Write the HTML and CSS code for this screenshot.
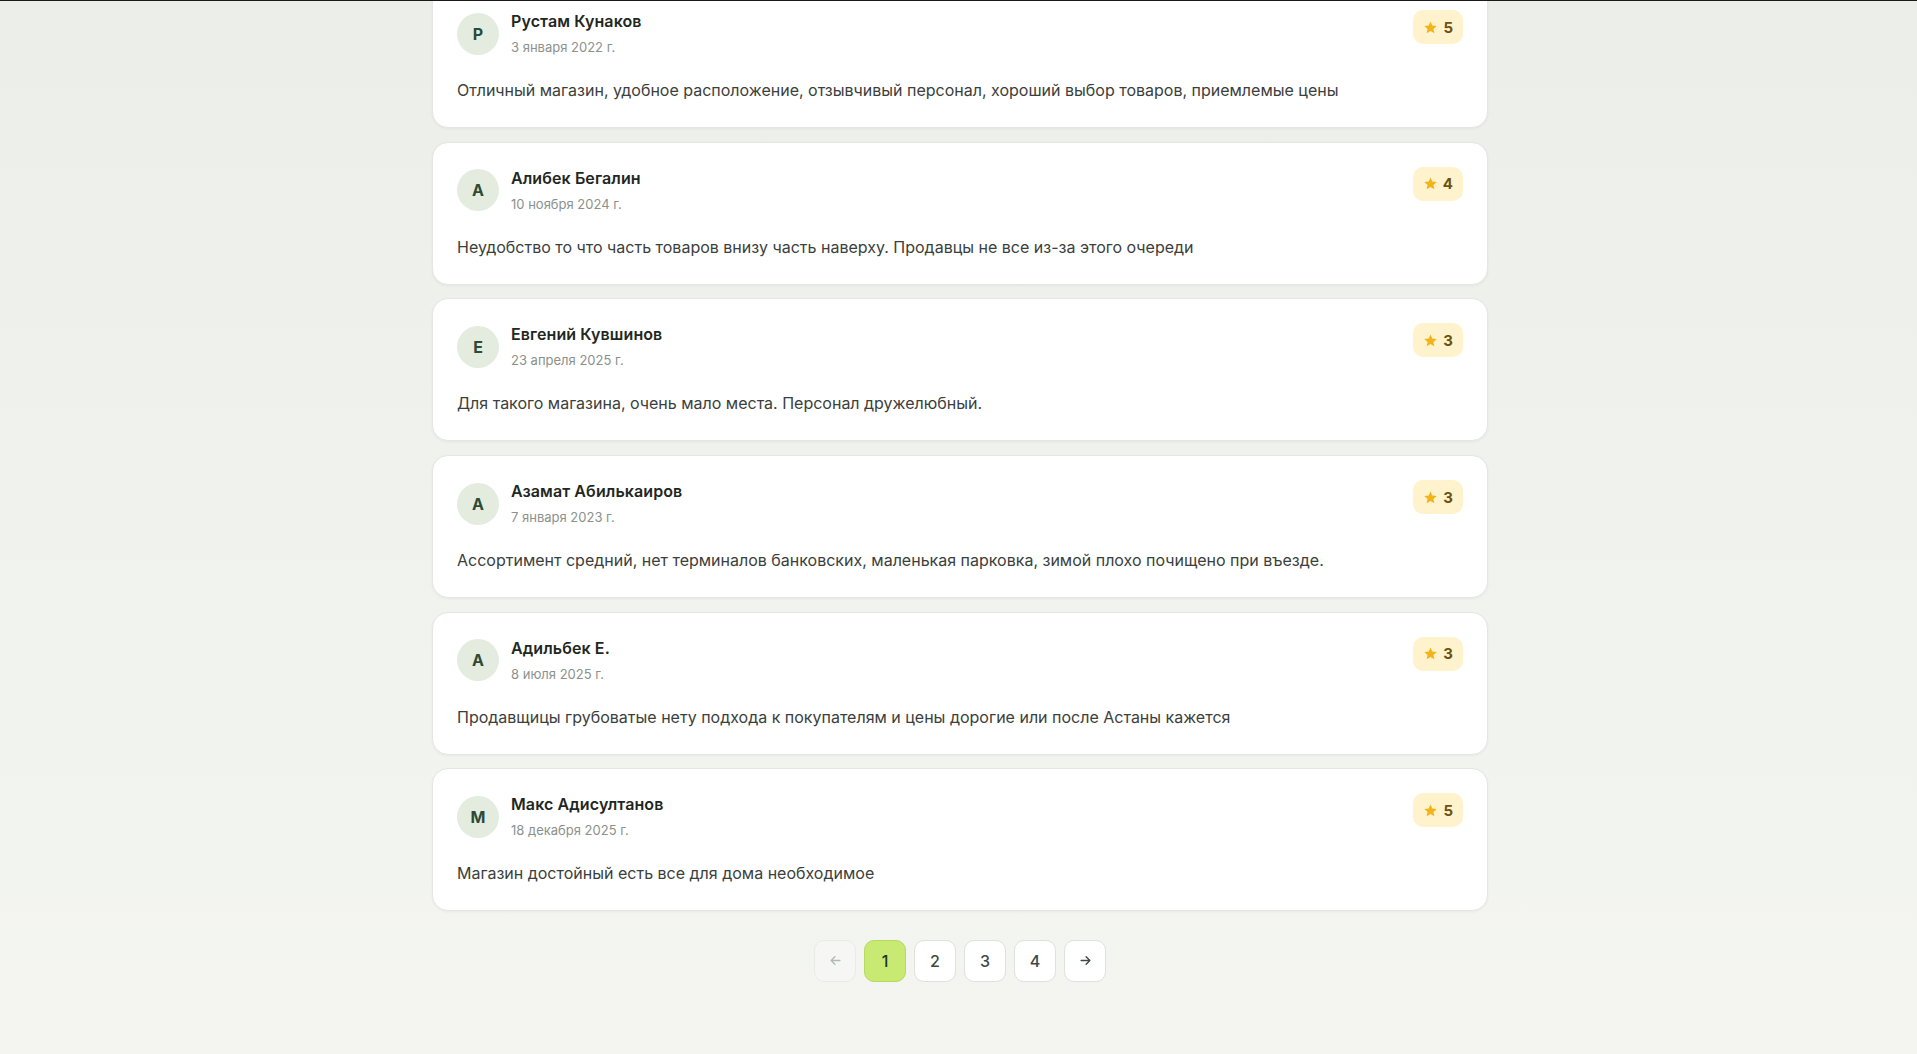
FILE: index.html
```html
<!DOCTYPE html>
<html lang="ru">
<head>
<meta charset="utf-8">
<title>Отзывы</title>
<link rel="stylesheet" href="styles.css">
</head>
<body>
<div class="topline"></div>
<main class="page">
  <section class="reviews">
    <article class="card">
      <header class="card-head">
        <div class="author">
          <div class="avatar">Р</div>
          <div class="meta">
            <div class="name">Рустам Кунаков</div>
            <div class="date">3 января 2022 г.</div>
          </div>
        </div>
        <div class="rating"><svg class="star" viewBox="0 0 24 24"><path d="M12 2.5l2.9 6.4 7 .7-5.2 4.7 1.5 6.9L12 17.6l-6.2 3.6 1.5-6.9L2.1 9.6l7-.7z"/></svg><span>5</span></div>
      </header>
      <p class="text">Отличный магазин, удобное расположение, отзывчивый персонал, хороший выбор товаров, приемлемые цены</p>
    </article>
    <article class="card">
      <header class="card-head">
        <div class="author">
          <div class="avatar">А</div>
          <div class="meta">
            <div class="name">Алибек Бегалин</div>
            <div class="date">10 ноября 2024 г.</div>
          </div>
        </div>
        <div class="rating"><svg class="star" viewBox="0 0 24 24"><path d="M12 2.5l2.9 6.4 7 .7-5.2 4.7 1.5 6.9L12 17.6l-6.2 3.6 1.5-6.9L2.1 9.6l7-.7z"/></svg><span>4</span></div>
      </header>
      <p class="text">Неудобство то что часть товаров внизу часть наверху. Продавцы не все из-за этого очереди</p>
    </article>
    <article class="card">
      <header class="card-head">
        <div class="author">
          <div class="avatar">Е</div>
          <div class="meta">
            <div class="name">Евгений Кувшинов</div>
            <div class="date">23 апреля 2025 г.</div>
          </div>
        </div>
        <div class="rating"><svg class="star" viewBox="0 0 24 24"><path d="M12 2.5l2.9 6.4 7 .7-5.2 4.7 1.5 6.9L12 17.6l-6.2 3.6 1.5-6.9L2.1 9.6l7-.7z"/></svg><span>3</span></div>
      </header>
      <p class="text">Для такого магазина, очень мало места. Персонал дружелюбный.</p>
    </article>
    <article class="card">
      <header class="card-head">
        <div class="author">
          <div class="avatar">А</div>
          <div class="meta">
            <div class="name">Азамат Абилькаиров</div>
            <div class="date">7 января 2023 г.</div>
          </div>
        </div>
        <div class="rating"><svg class="star" viewBox="0 0 24 24"><path d="M12 2.5l2.9 6.4 7 .7-5.2 4.7 1.5 6.9L12 17.6l-6.2 3.6 1.5-6.9L2.1 9.6l7-.7z"/></svg><span>3</span></div>
      </header>
      <p class="text">Ассортимент средний, нет терминалов банковских, маленькая парковка, зимой плохо почищено при въезде.</p>
    </article>
    <article class="card">
      <header class="card-head">
        <div class="author">
          <div class="avatar">А</div>
          <div class="meta">
            <div class="name">Адильбек Е.</div>
            <div class="date">8 июля 2025 г.</div>
          </div>
        </div>
        <div class="rating"><svg class="star" viewBox="0 0 24 24"><path d="M12 2.5l2.9 6.4 7 .7-5.2 4.7 1.5 6.9L12 17.6l-6.2 3.6 1.5-6.9L2.1 9.6l7-.7z"/></svg><span>3</span></div>
      </header>
      <p class="text">Продавщицы грубоватые нету подхода к покупателям и цены дорогие или после Астаны кажется</p>
    </article>
    <article class="card">
      <header class="card-head">
        <div class="author">
          <div class="avatar">М</div>
          <div class="meta">
            <div class="name">Макс Адисултанов</div>
            <div class="date">18 декабря 2025 г.</div>
          </div>
        </div>
        <div class="rating"><svg class="star" viewBox="0 0 24 24"><path d="M12 2.5l2.9 6.4 7 .7-5.2 4.7 1.5 6.9L12 17.6l-6.2 3.6 1.5-6.9L2.1 9.6l7-.7z"/></svg><span>5</span></div>
      </header>
      <p class="text">Магазин достойный есть все для дома необходимое</p>
    </article>
  </section>
  <nav class="pagination">
    <button class="page-btn disabled" aria-label="Назад"><svg viewBox="0 0 24 24"><path d="M19 12H5M11 6l-6 6 6 6"/></svg></button>
    <button class="page-btn active">1</button>
    <button class="page-btn">2</button>
    <button class="page-btn">3</button>
    <button class="page-btn">4</button>
    <button class="page-btn" aria-label="Вперёд"><svg viewBox="0 0 24 24"><path d="M5 12h14M13 6l6 6-6 6"/></svg></button>
  </nav>
</main>
</body>
</html>
```

FILE: styles.css
```css
* { box-sizing: border-box; }
html, body { margin: 0; padding: 0; }
body {
  font-family: Inter, "Noto Sans", "DejaVu Sans", sans-serif;
  background: linear-gradient(180deg, #eceee9 0%, #f1f3ee 60%, #f4f5f1 100%);
  min-height: 1054px;
  color: #2b322d;
  overflow: hidden;
}
.topline {
  position: absolute;
  top: 0; left: 0; right: 0;
  height: 1px;
  background: #1a1a1a;
  z-index: 5;
}
.page {
  width: 1056px;
  margin: 0 0 0 432px;
}
.reviews {
  display: flex;
  flex-direction: column;
  gap: 13.7px;
  margin-top: -15px;
}
.card {
  background: #ffffff;
  border: 1px solid #e4e7e1;
  border-radius: 16px;
  padding: 24px 24px 25px;
  box-shadow: 0 1px 3px rgba(30, 40, 30, 0.05);
}
.card-head {
  display: flex;
  justify-content: space-between;
  align-items: flex-start;
}
.author {
  display: flex;
  align-items: center;
  gap: 12px;
}
.avatar {
  width: 42px;
  height: 42px;
  border-radius: 50%;
  background: #e3ecdf;
  color: #2d4a36;
  font-weight: 700;
  font-size: 16px;
  display: flex;
  align-items: center;
  justify-content: center;
}
.meta {
  display: flex;
  flex-direction: column;
  gap: 4px;
}
.name {
  font-size: 16px;
  line-height: 22px;
  font-weight: 600;
  color: #1f2722;
  letter-spacing: 0.1px;
}
.date {
  font-size: 13px;
  line-height: 20px;
  color: #8b918c;
  margin-top: 1px;
}
.rating {
  display: flex;
  align-items: center;
  gap: 5px;
  height: 34px;
  padding: 0 10px;
  background: #fef3cd;
  border-radius: 10px;
  font-size: 15px;
  font-weight: 700;
  color: #6b5213;
}
.star {
  width: 15px;
  height: 15px;
  fill: #f2b418;
}
.text {
  margin: 21px 0 0;
  font-size: 16px;
  line-height: 24px;
  color: #3a403c;
}
.pagination {
  display: flex;
  justify-content: center;
  gap: 8px;
  margin-top: 28.5px;
}
.page-btn {
  width: 42px;
  height: 42px;
  border-radius: 10px;
  border: 1px solid #dde2db;
  background: #ffffff;
  font-family: inherit;
  font-size: 16px;
  font-weight: 500;
  color: #3d4a43;
  display: flex;
  align-items: center;
  justify-content: center;
  padding: 0;
}
.page-btn svg {
  width: 15px;
  height: 15px;
  fill: none;
  stroke: #3d4a43;
  stroke-width: 2.2;
  stroke-linecap: round;
  stroke-linejoin: round;
}
.page-btn.active {
  background: #c8e972;
  border-color: #b6d962;
  color: #1d3526;
}
.page-btn.disabled {
  background: #f6f7f4;
  border-color: #e9ece6;
}
.page-btn.disabled svg {
  stroke: #b4b9b4;
}
```
